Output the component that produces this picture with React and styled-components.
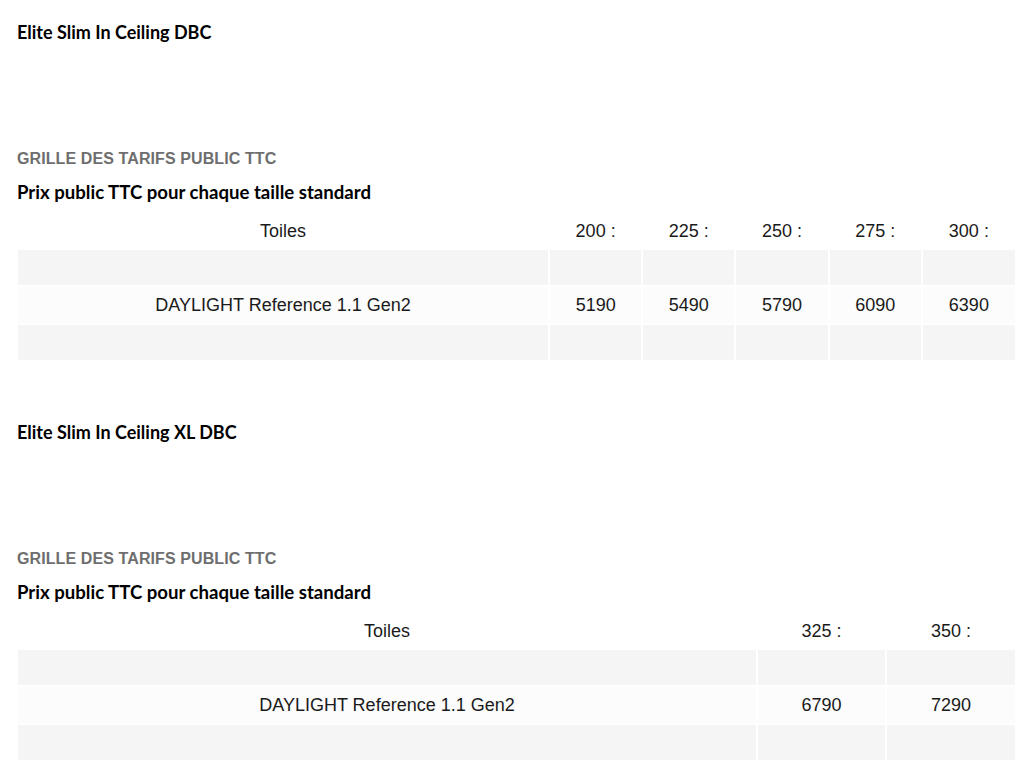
import React from 'react';
import styled, { createGlobalStyle } from 'styled-components';

const Global = createGlobalStyle`
  body {
    margin: 0;
    background: #ffffff;
    font-family: "Liberation Sans", Arial, sans-serif;
  }
`;

const Page = styled.div`
  padding: 20px 19px 0 17px;
`;

const Section = styled.section`
  & + & {
    margin-top: 58px;
  }
`;

const Title = styled.h2`
  margin: 0;
  font-family: Lato, "Open Sans", sans-serif;
  font-weight: 700;
  font-size: 18px;
  line-height: 24px;
  color: #000;
`;

const Label = styled.div`
  margin-top: 105px;
  font-family: "Liberation Sans", Arial, sans-serif;
  font-weight: 700;
  font-size: 16px;
  line-height: 20px;
  letter-spacing: 0.1px;
  color: #6e6e6e;
`;

const Subtitle = styled.h3`
  margin: 11px 0 0;
  font-family: Lato, "Open Sans", sans-serif;
  font-weight: 700;
  font-size: 18.6px;
  line-height: 24px;
  color: #000;
`;

const Table = styled.table`
  margin: 9px 0 0 -1px;
  width: calc(100% + 1px);
  border-collapse: separate;
  border-spacing: 2px;
  table-layout: fixed;
  font-size: 18px;
  color: #1a1a1a;
`;

const HeadCell = styled.th`
  height: 33px;
  padding: 0;
  font-weight: 400;
  text-align: center;
  vertical-align: middle;
`;

const Row = styled.tr`
  background: ${p => (p.$light ? '#fcfcfc' : 'transparent')};
`;

const Cell = styled.td`
  height: ${p => (p.$tall ? '36px' : '35px')};
  padding: 0;
  text-align: center;
  vertical-align: middle;
  background: ${p => (p.$filled ? '#f5f5f5' : 'transparent')};
`;

const PriceTable = ({ widths, sizes, product, prices }) => (
  <Table>
    <colgroup>
      {widths.map((w, i) => (
        <col key={i} style={{ width: w }} />
      ))}
    </colgroup>
    <thead>
      <tr>
        <HeadCell>Toiles</HeadCell>
        {sizes.map(s => (
          <HeadCell key={s}>{s} :</HeadCell>
        ))}
      </tr>
    </thead>
    <tbody>
      <tr>
        <Cell $filled />
        {sizes.map(s => (
          <Cell key={s} $filled />
        ))}
      </tr>
      <Row $light>
        <Cell $tall>{product}</Cell>
        {prices.map((p, i) => (
          <Cell key={i} $tall>{p}</Cell>
        ))}
      </Row>
      <tr>
        <Cell $filled />
        {sizes.map(s => (
          <Cell key={s} $filled />
        ))}
      </tr>
    </tbody>
  </Table>
);

const sections = [
  {
    title: 'Elite Slim In Ceiling DBC',
    widths: ['529px', '91px', '91px', '91px', '91px', '92px'],
    sizes: [200, 225, 250, 275, 300],
    prices: [5190, 5490, 5790, 6090, 6390],
  },
  {
    title: 'Elite Slim In Ceiling XL DBC',
    widths: ['738px', '127px', '128px'],
    sizes: [325, 350],
    prices: [6790, 7290],
  },
];

export default function App() {
  return (
    <>
      <Global />
      <Page>
        {sections.map(s => (
          <Section key={s.title}>
            <Title>{s.title}</Title>
            <Label>GRILLE DES TARIFS PUBLIC TTC</Label>
            <Subtitle>Prix public TTC pour chaque taille standard</Subtitle>
            <PriceTable
              widths={s.widths}
              sizes={s.sizes}
              product="DAYLIGHT Reference 1.1 Gen2"
              prices={s.prices}
            />
          </Section>
        ))}
      </Page>
    </>
  );
}
